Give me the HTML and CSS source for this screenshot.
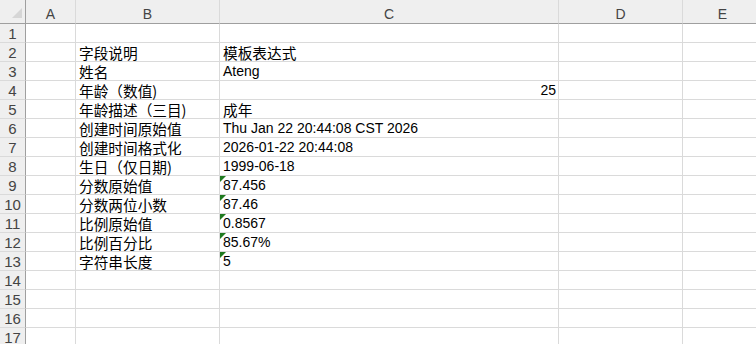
FILE: index.html
```html
<!DOCTYPE html>
<html lang="zh-CN">
<head>
    <meta charset="UTF-8">
    <meta name="viewport" content="width=device-width, initial-scale=1.0">
    <title>Sheet1</title>
    <link rel="stylesheet" href="styles.css">
</head>
<body>
    <div class="sheet">
        <!-- column headers -->
        <div class="corner"><span class="corner-mark"></span></div>
        <div class="col-head">A</div>
        <div class="col-head">B</div>
        <div class="col-head">C</div>
        <div class="col-head">D</div>
        <div class="col-head">E</div>

        <div class="row-head">1</div>
        <div class="cell"></div><div class="cell"></div><div class="cell"></div><div class="cell"></div><div class="cell"></div>

        <div class="row-head">2</div>
        <div class="cell"></div><div class="cell zh">字段说明</div><div class="cell zh">模板表达式</div><div class="cell"></div><div class="cell"></div>

        <div class="row-head">3</div>
        <div class="cell"></div><div class="cell zh">姓名</div><div class="cell">Ateng</div><div class="cell"></div><div class="cell"></div>

        <div class="row-head">4</div>
        <div class="cell"></div><div class="cell zh">年龄（数值)</div><div class="cell num">25</div><div class="cell"></div><div class="cell"></div>

        <div class="row-head">5</div>
        <div class="cell"></div><div class="cell zh">年龄描述（三目)</div><div class="cell zh">成年</div><div class="cell"></div><div class="cell"></div>

        <div class="row-head">6</div>
        <div class="cell"></div><div class="cell zh">创建时间原始值</div><div class="cell">Thu Jan 22 20:44:08 CST 2026</div><div class="cell"></div><div class="cell"></div>

        <div class="row-head">7</div>
        <div class="cell"></div><div class="cell zh">创建时间格式化</div><div class="cell">2026-01-22 20:44:08</div><div class="cell"></div><div class="cell"></div>

        <div class="row-head">8</div>
        <div class="cell"></div><div class="cell zh">生日（仅日期)</div><div class="cell">1999-06-18</div><div class="cell"></div><div class="cell"></div>

        <div class="row-head">9</div>
        <div class="cell"></div><div class="cell zh">分数原始值</div><div class="cell flagged">87.456</div><div class="cell"></div><div class="cell"></div>

        <div class="row-head">10</div>
        <div class="cell"></div><div class="cell zh">分数两位小数</div><div class="cell flagged">87.46</div><div class="cell"></div><div class="cell"></div>

        <div class="row-head">11</div>
        <div class="cell"></div><div class="cell zh">比例原始值</div><div class="cell flagged">0.8567</div><div class="cell"></div><div class="cell"></div>

        <div class="row-head">12</div>
        <div class="cell"></div><div class="cell zh">比例百分比</div><div class="cell flagged">85.67%</div><div class="cell"></div><div class="cell"></div>

        <div class="row-head">13</div>
        <div class="cell"></div><div class="cell zh">字符串长度</div><div class="cell flagged">5</div><div class="cell"></div><div class="cell"></div>

        <div class="row-head">14</div>
        <div class="cell"></div><div class="cell"></div><div class="cell"></div><div class="cell"></div><div class="cell"></div>

        <div class="row-head">15</div>
        <div class="cell"></div><div class="cell"></div><div class="cell"></div><div class="cell"></div><div class="cell"></div>

        <div class="row-head">16</div>
        <div class="cell"></div><div class="cell"></div><div class="cell"></div><div class="cell"></div><div class="cell"></div>

        <div class="row-head">17</div>
        <div class="cell"></div><div class="cell"></div><div class="cell"></div><div class="cell"></div><div class="cell"></div>
    </div>
</body>
</html>
```

FILE: styles.css
```css
* {
    margin: 0;
    padding: 0;
    box-sizing: border-box;
}

body {
    font-family: "Liberation Sans", "Noto Sans CJK SC", sans-serif;
    font-size: 14px;
    background: #ffffff;
    color: #000000;
    overflow: hidden;
}

.sheet {
    display: grid;
    grid-template-columns: 26px 50px 144px 339px 124px 80px;
    grid-template-rows: 24px;
    grid-auto-rows: 19px;
    width: 756px;
    height: 344px;
    overflow: hidden;
}

/* header row + row numbers */
.corner,
.col-head,
.row-head {
    background: #efefef;
    color: #444444;
}

.corner {
    display: flex;
    justify-content: flex-end;
    align-items: flex-end;
    padding: 0 3px 5px 0;
    border-right: 1px solid #9f9f9f;
    border-bottom: 1px solid #9f9f9f;
}

.corner-mark {
    width: 10px;
    height: 10px;
    background: #d6d6d6;
    clip-path: polygon(100% 0, 100% 100%, 0 100%);
}

.col-head {
    text-align: center;
    padding-top: 6px;
    line-height: 17px;
    border-right: 1px solid #dadada;
    border-bottom: 1px solid #9f9f9f;
}

.row-head {
    text-align: center;
    padding-top: 1px;
    font-size: 15px;
    line-height: 18px;
    border-right: 1px solid #9f9f9f;
    border-bottom: 1px solid #dadada;
}

/* data cells */
.cell {
    position: relative;
    padding: 0 2px 0 3px;
    line-height: 18px;
    white-space: nowrap;
    border-right: 1px solid #dadada;
    border-bottom: 1px solid #dadada;
}

.cell.zh {
    font-family: "Noto Sans CJK SC", "Liberation Sans", sans-serif;
    font-size: 11pt;
    padding-top: 1px;
}

.cell.num {
    text-align: right;
}

/* number stored as text marker */
.cell.flagged::before {
    content: "";
    position: absolute;
    left: 0;
    top: 0;
    width: 6px;
    height: 6px;
    background: #1f7a1f;
    clip-path: polygon(0 0, 100% 0, 0 100%);
}
```
